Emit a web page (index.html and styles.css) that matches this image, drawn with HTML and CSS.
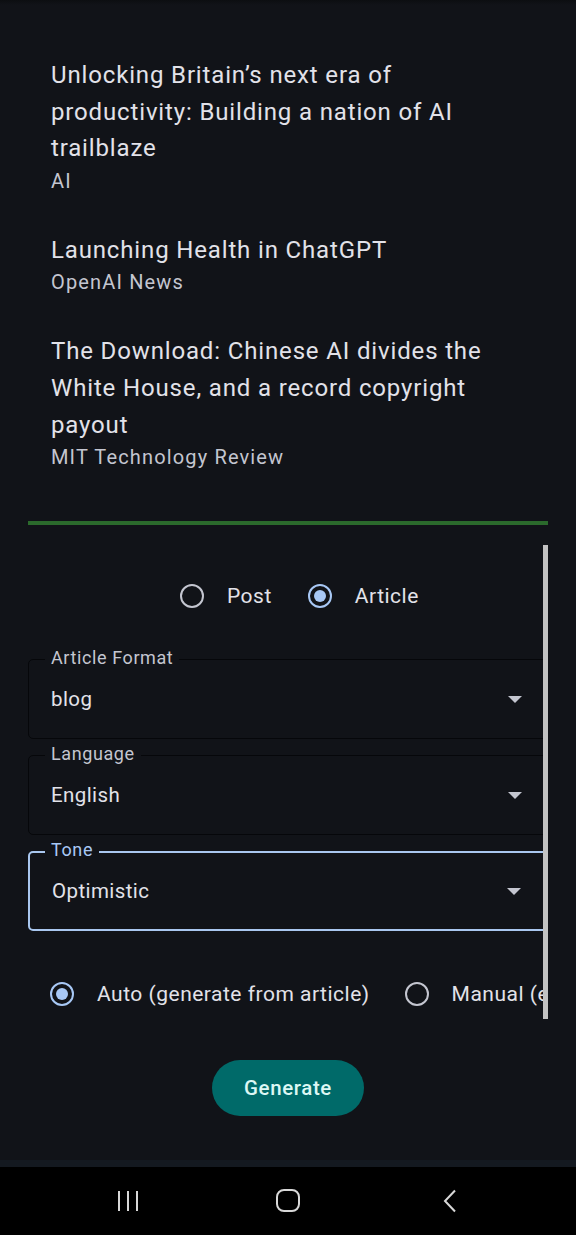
FILE: index.html
```html
<!DOCTYPE html>
<html lang="en">
<head>
<meta charset="utf-8">
<title>News</title>
<link rel="stylesheet" href="styles.css">
</head>
<body>
<div class="top-edge"></div>
<main class="page">
  <section class="news">
    <article class="item">
      <h2 class="title">Unlocking Britain’s next era of productivity: Building a nation of AI trailblaze</h2>
      <p class="source">AI</p>
    </article>
    <article class="item">
      <h2 class="title">Launching Health in ChatGPT</h2>
      <p class="source">OpenAI News</p>
    </article>
    <article class="item">
      <h2 class="title">The Download: Chinese AI divides the White House, and a record copyright payout</h2>
      <p class="source">MIT Technology Review</p>
    </article>
  </section>

  <div class="divider"></div>

  <section class="panel">
    <div class="panel-scroll">
      <div class="type-row">
        <label class="radio"><span class="dot"></span><span>Post</span></label>
        <label class="radio"><span class="dot on"></span><span>Article</span></label>
      </div>

      <div class="field">
        <span class="field-label">Article Format</span>
        <span class="field-value">blog</span>
        <span class="caret"></span>
      </div>
      <div class="field">
        <span class="field-label">Language</span>
        <span class="field-value">English</span>
        <span class="caret"></span>
      </div>
      <div class="field focused">
        <span class="field-label">Tone</span>
        <span class="field-value">Optimistic</span>
        <span class="caret"></span>
      </div>

      <div class="mode-row">
        <label class="radio"><span class="dot on"></span><span>Auto (generate from article)</span></label>
        <label class="radio"><span class="dot"></span><span>Manual (enter topic)</span></label>
      </div>
    </div>
    <div class="scrollbar"></div>
  </section>

  <div class="actions">
    <button class="generate">Generate</button>
  </div>
</main>
<nav class="navbar">
  <svg class="nav-icon" width="24" height="24" viewBox="0 0 24 24"><path d="M3 2v20M12 2v20M21 2v20" stroke="#d8d8d8" stroke-width="2" fill="none"/></svg>
  <svg class="nav-icon" width="26" height="26" viewBox="0 0 26 26"><rect x="2" y="2" width="22" height="21" rx="7" stroke="#d8d8d8" stroke-width="2" fill="none"/></svg>
  <svg class="nav-icon" width="16" height="24" viewBox="0 0 16 24"><path d="M13 1.5L3 12l10 10.5" stroke="#d8d8d8" stroke-width="2" fill="none"/></svg>
</nav>
</body>
</html>
```
FILE: styles.css
```css
* { box-sizing: border-box; }
html, body { margin: 0; padding: 0; }
body {
  width: 576px;
  height: 1235px;
  overflow: hidden;
  background: #111318;
  font-family: Roboto, "Noto Sans", sans-serif;
  color: #e2e2e9;
  display: flex;
  flex-direction: column;
}
.top-edge {
  height: 5px;
  background: linear-gradient(#0c0e11, #111318);
}
.page {
  flex: 1;
  display: flex;
  flex-direction: column;
}
.news {
  padding: 52px 52px 0 51px;
  display: flex;
  flex-direction: column;
  gap: 37px;
}
.title {
  margin: 0;
  font-weight: 400;
  font-size: 24px;
  line-height: 36.6px;
  letter-spacing: 0.85px;
  color: #e2e2e9;
}
.source {
  margin: 0;
  font-size: 20px;
  line-height: 28px;
  color: #c4c6d0;
  letter-spacing: 1.15px;
}
.divider {
  margin: 50px 28px 0 28px;
  height: 4px;
  background: #2b6a2c;
}
.panel {
  margin: 20px 0 0 28px;
  width: 520px;
  height: 474px;
  display: flex;
}
.panel-scroll {
  width: 515px;
  overflow: hidden;
  display: flex;
  flex-direction: column;
}
.scrollbar {
  width: 5px;
  background: #c2c2c2;
}
.radio {
  display: flex;
  align-items: center;
  gap: 23px;
  font-size: 21px;
  color: #e2e2e9;
  letter-spacing: 0.5px;
  white-space: nowrap;
  flex-shrink: 0;
}
.dot {
  width: 24px;
  height: 24px;
  border-radius: 50%;
  border: 2.5px solid #c4c6d0;
  flex-shrink: 0;
  display: flex;
  align-items: center;
  justify-content: center;
}
.dot.on { border-color: #a8c8f5; }
.dot.on::after {
  content: "";
  width: 12px;
  height: 12px;
  border-radius: 50%;
  background: #a8c8f5;
}
.type-row {
  display: flex;
  gap: 36px;
  padding: 39px 0 0 152px;
  height: 63px;
}
.field {
  position: relative;
  width: 530px;
  height: 80px;
  border: 1.5px solid #06070a;
  border-radius: 5px;
  display: flex;
  align-items: center;
  padding: 0 22px;
  flex-shrink: 0;
}
.type-row + .field { margin-top: 51px; }
.field + .field { margin-top: 16px; }
.field.focused {
  border: 2px solid #a9c7ef;
}
.field-label {
  position: absolute;
  top: -12px;
  left: 16px;
  padding: 0 6px;
  background: #111318;
  font-size: 18px;
  line-height: 20px;
  color: #c4c6d0;
  letter-spacing: 0.6px;
}
.focused .field-label { color: #a8c8f5; top: -13px; left: 15px; }
.field-value {
  flex: 1;
  font-size: 20.5px;
  color: #e2e2e9;
  letter-spacing: 0.4px;
}
.caret {
  width: 0;
  height: 0;
  border-left: 7px solid transparent;
  border-right: 7px solid transparent;
  border-top: 7px solid #c4c6d0;
  margin-right: 13px;
}
.mode-row {
  display: flex;
  gap: 35px;
  padding: 51px 0 0 22px;
}
.actions {
  display: flex;
  justify-content: center;
  padding-top: 41px;
}
.generate {
  width: 152px;
  height: 56px;
  border: none;
  border-radius: 28px;
  background: #006a69;
  color: #dcf7f4;
  font-family: Roboto, sans-serif;
  font-weight: 500;
  font-size: 20.5px;
  letter-spacing: 0.6px;
}
.navbar {
  height: 75px;
  background: #000;
  border-top: 7px solid #141920;
  display: flex;
  justify-content: space-between;
  align-items: center;
  padding: 0 118px 0 116px;
}
.nav-icon { display: block; }
.nav-icon:nth-child(2) { margin-left: -6px; }
```
